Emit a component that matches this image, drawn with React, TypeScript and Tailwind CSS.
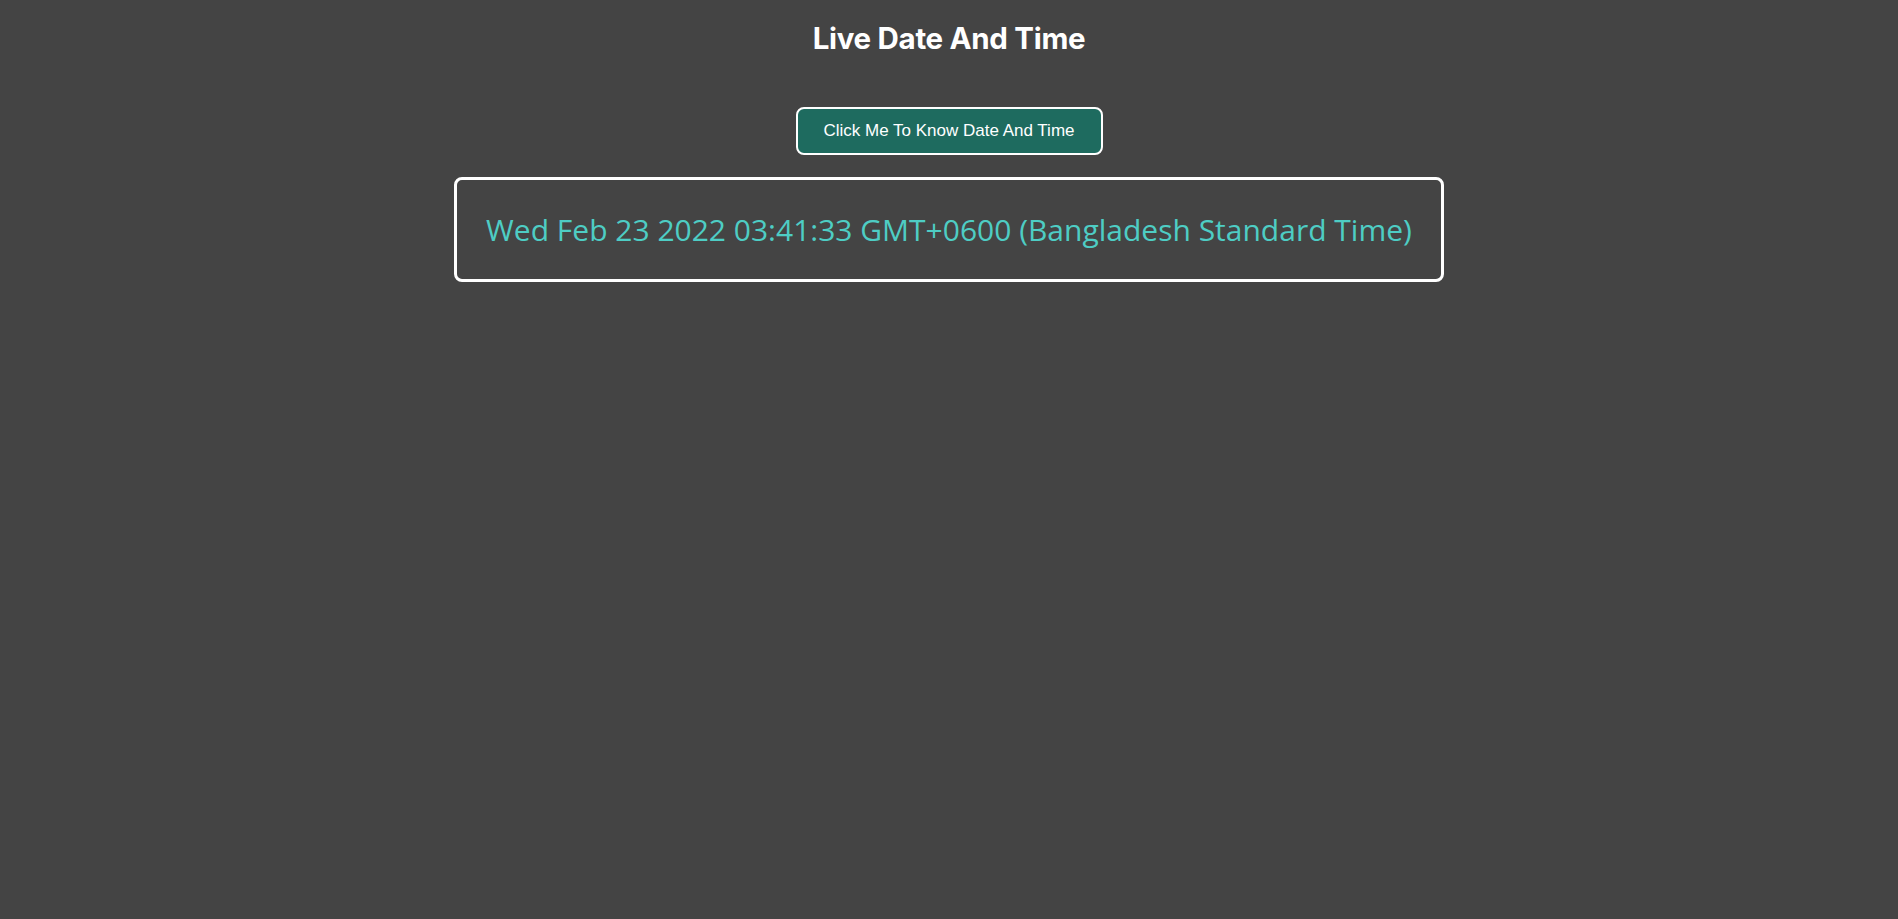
export default function App() {
  const now = 'Wed Feb 23 2022 03:41:33 GMT+0600 (Bangladesh Standard Time)'

  return (
    <div className="min-h-[919px] w-full bg-[#444444] flex flex-col items-center">
      <h1 className="mt-[20px] text-[29.5px] leading-[36px] font-bold text-white font-['Inter',sans-serif] tracking-[-0.3px]">
        Live Date And Time
      </h1>

      <button className="mt-[51px] h-[48px] w-[307px] rounded-[8px] border-2 border-white bg-[#1e6b5f] text-[17px] text-white font-['Liberation_Sans',Arial,sans-serif]">
        Click Me To Know Date And Time
      </button>

      <div className="mt-[22px] flex h-[105px] w-[990px] items-center justify-center rounded-[8px] border-[3px] border-white">
        <p className="whitespace-nowrap text-[30px] text-[#4ecdc4] font-['Open_Sans',sans-serif]">{now}</p>
      </div>
    </div>
  )
}
